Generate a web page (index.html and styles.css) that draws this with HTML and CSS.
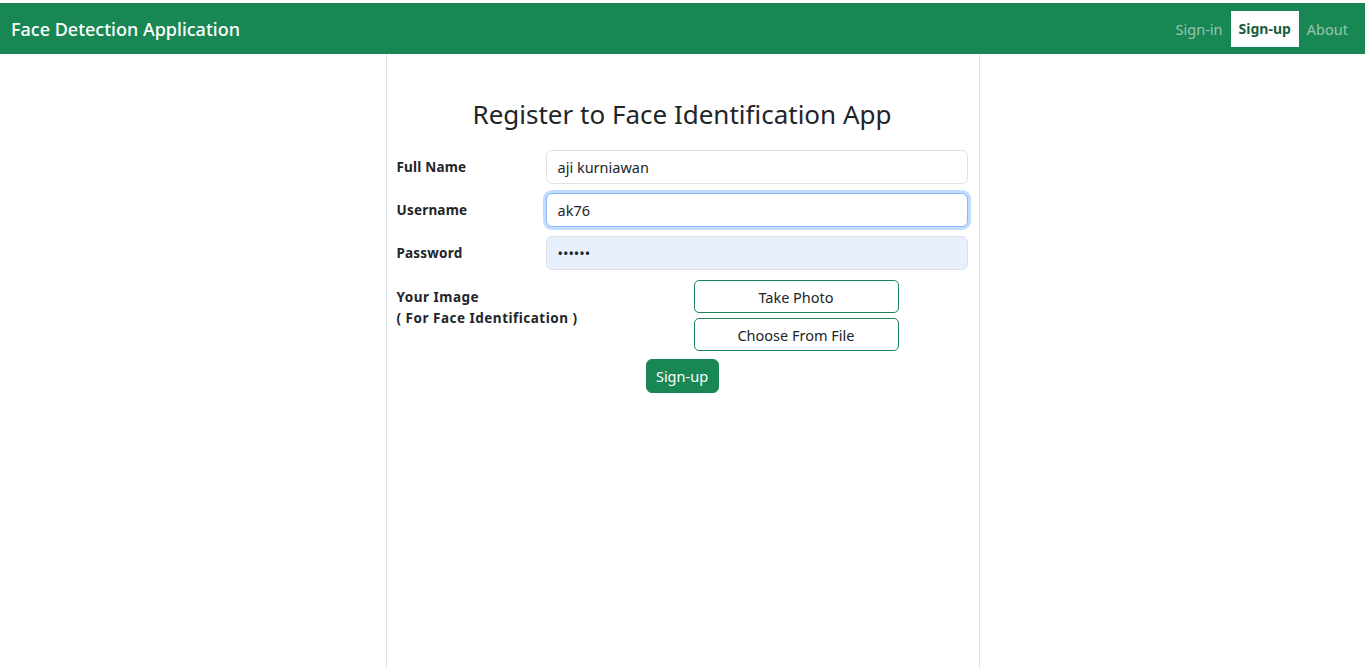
FILE: index.html
```html
<!DOCTYPE html>
<html lang="en">
<head>
<meta charset="utf-8">
<title>Face Detection Application</title>
<link rel="stylesheet" href="styles.css">
</head>
<body>
<nav class="navbar">
  <a class="brand" href="#">Face Detection Application</a>
  <div class="nav-links">
    <a class="nav-link" href="#">Sign-in</a>
    <a class="nav-link active" href="#">Sign-up</a>
    <a class="nav-link" href="#">About</a>
  </div>
</nav>
<main class="panel">
  <h3 class="title">Register to Face Identification App</h3>
  <form class="form">
    <div class="field">
      <label class="label">Full Name</label>
      <input class="input" type="text" value="aji kurniawan">
    </div>
    <div class="field">
      <label class="label">Username</label>
      <input class="input focus" type="text" value="ak76">
    </div>
    <div class="field">
      <label class="label">Password</label>
      <input class="input autofill" type="password" value="secret">
    </div>
    <div class="image-row">
      <div class="label image-label">Your Image<br>( For Face Identification )</div>
      <div class="image-buttons">
        <button type="button" class="btn-outline">Take Photo</button>
        <button type="button" class="btn-outline">Choose From File</button>
      </div>
    </div>
    <div class="submit-row">
      <button type="button" class="btn-submit">Sign-up</button>
    </div>
  </form>
</main>
</body>
</html>
```
FILE: styles.css
```css
* { box-sizing: border-box; }
html, body { margin: 0; padding: 0; }
body {
  font-family: "Comic Sans MS", "Noto Sans", sans-serif;
  color: #212529;
  background: #fff;
  font-size: 15px;
}
.navbar {
  margin-top: 3px;
  height: 51px;
  background: #198754;
  display: flex;
  align-items: center;
  justify-content: space-between;
  padding: 0 9px 0 11px;
}
.brand {
  color: #fff;
  text-decoration: none;
  font-size: 18px;
  font-weight: 500;
}
.nav-links { display: flex; align-items: center; }
.nav-link {
  display: block;
  height: 36px;
  line-height: 36px;
  padding: 0 8px;
  color: rgba(255,255,255,0.55);
  text-decoration: none;
  font-size: 14.5px;
}
.nav-link.active {
  background: #fff;
  color: #1b5e3f;
  font-weight: 700;
  font-size: 14px;
}
.panel {
  width: 594px;
  margin: 0 auto;
  min-height: calc(100vh - 54px);
  border-left: 1px solid #dee2e6;
  border-right: 1px solid #dee2e6;
  padding: 42px 11px 0 10px;
}
.title {
  margin: 0 0 18px;
  text-align: center;
  font-size: 26px;
  font-weight: 400;
  line-height: 36px;
}
.field {
  display: flex;
  align-items: center;
  margin-bottom: 9px;
}
.label {
  width: 149px;
  flex: none;
  font-weight: 700;
  font-size: 13.5px;
  letter-spacing: 0.2px;
}
.input {
  flex: 1;
  height: 34px;
  border: 1px solid #dee2e6;
  border-radius: 6px;
  padding: 0 11px;
  font-family: inherit;
  font-size: 14.5px;
  color: #212529;
  background: #fff;
}
.input.focus {
  border-color: #86b7fe;
  box-shadow: 0 0 0 3px rgba(13,110,253,0.25);
  outline: none;
}
.input.autofill { background: #e8f0fe; }
.image-row {
  display: flex;
  margin-top: 10px;
}
.image-label {
  width: 297px;
  line-height: 21px;
  padding-top: 7px;
  letter-spacing: 0.5px;
}
.image-buttons {
  display: flex;
  flex-direction: column;
  gap: 5px;
  width: 205px;
}
.btn-outline {
  height: 33px;
  border: 1px solid #198754;
  border-radius: 5px;
  background: #fff;
  color: #212529;
  font-family: inherit;
  font-size: 14.5px;
}
.submit-row {
  display: flex;
  justify-content: center;
  margin-top: 8px;
}
.btn-submit {
  width: 73px;
  height: 34px;
  border: 1px solid #198754;
  border-radius: 6px;
  background: #198754;
  color: #fff;
  font-family: inherit;
  font-size: 14.5px;
}
```
